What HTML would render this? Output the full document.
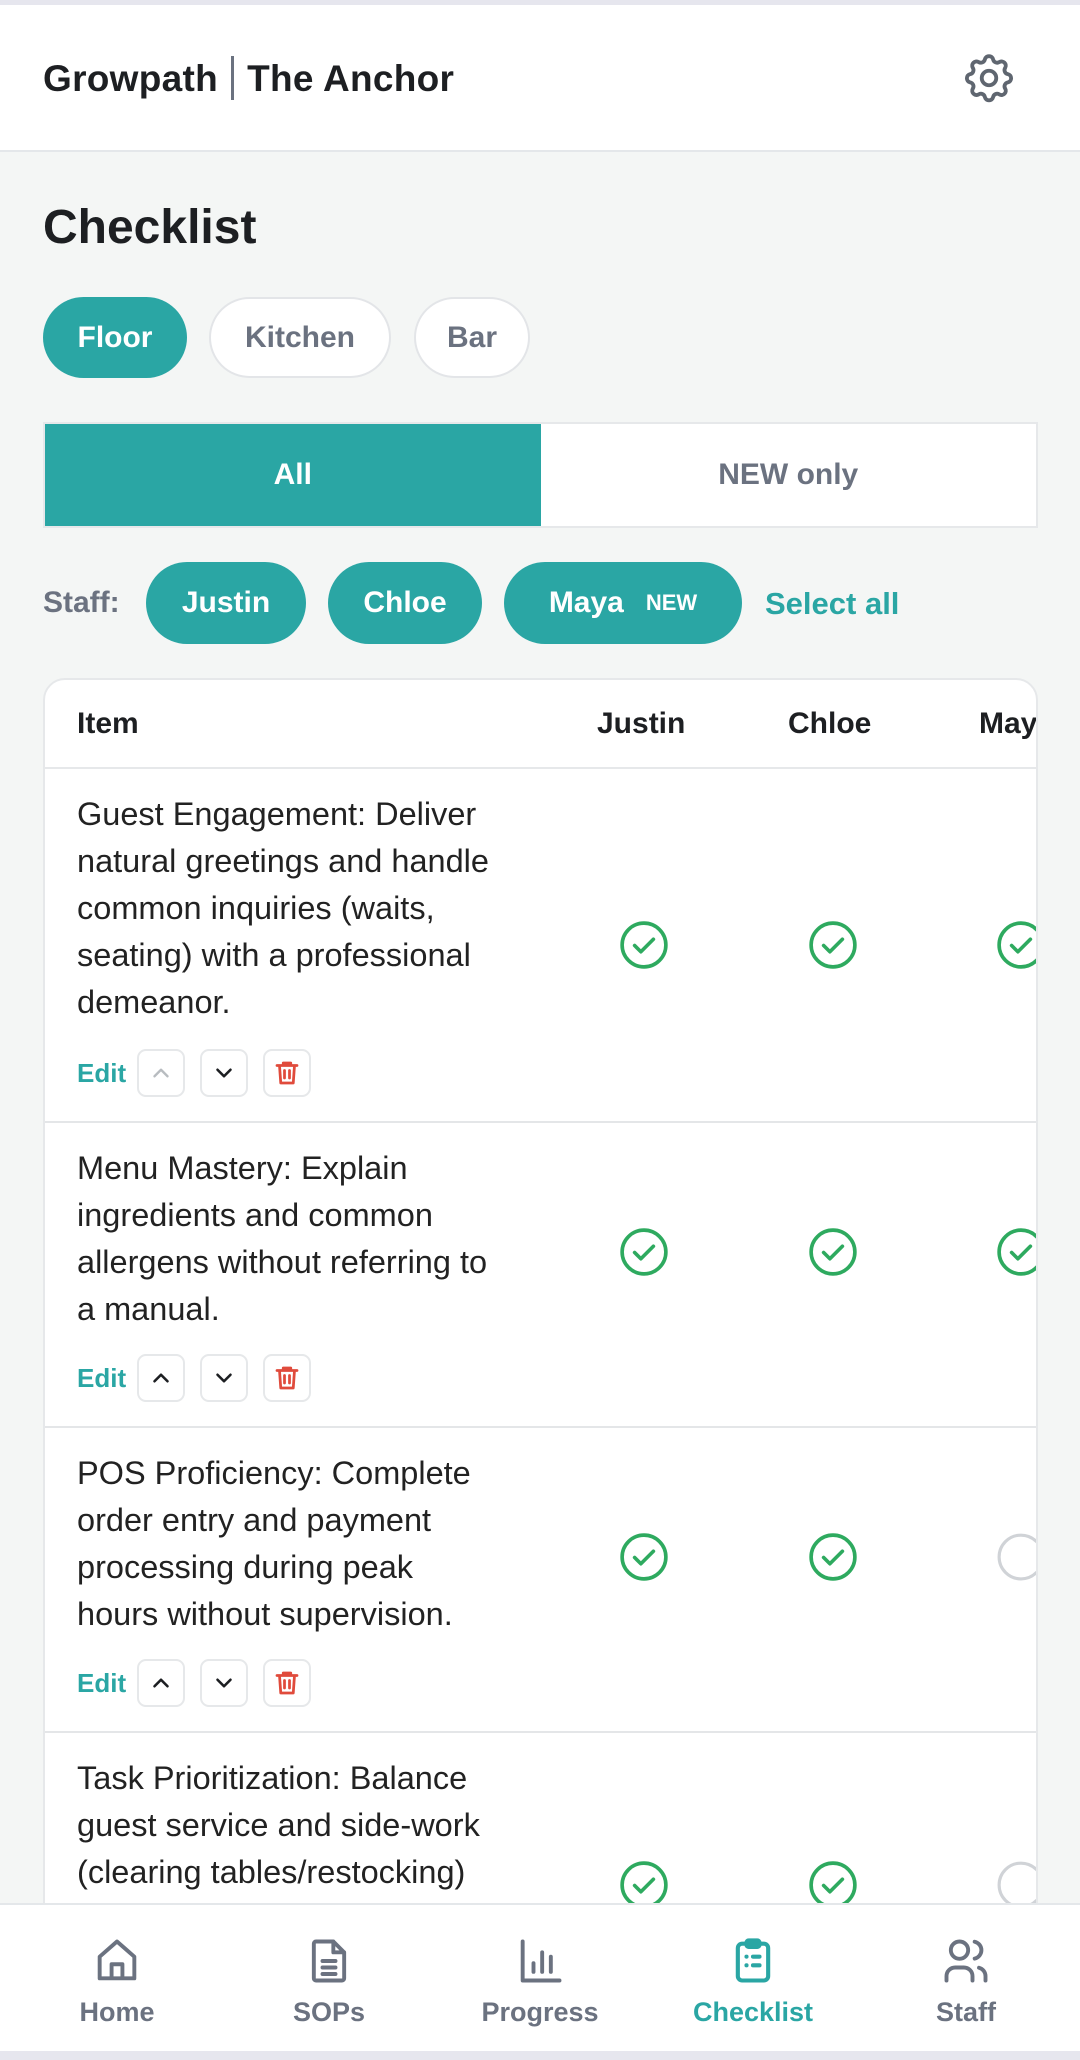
<!DOCTYPE html>
<html><head><meta charset="utf-8"><style>
*{box-sizing:border-box;margin:0;padding:0}
body{width:1080px;height:2060px;overflow:hidden;background:#f4f6f5;font-family:"Liberation Sans",sans-serif;color:#1d1f22;position:relative}
.topline{position:absolute;top:0;left:0;width:1080px;height:5px;background:#e6e6ee}
.header{position:absolute;top:5px;left:0;width:1080px;height:147px;background:#fff;border-bottom:2px solid #e4e7ea}
.title{position:absolute;left:43px;top:51px;font-size:37px;font-weight:700;letter-spacing:0.3px}
.title .bar{display:inline-block;width:3px;height:44px;background:#6b7280;vertical-align:-9px;margin:0 13px}
.gear{position:absolute;left:960px;top:44px}
h1{position:absolute;left:43px;top:200px;font-size:48px;font-weight:700}
.pill{position:absolute;height:81px;border-radius:41px;font-size:30px;font-weight:700;display:flex;align-items:center;justify-content:center}
.on{background:#2aa6a4;color:#fff}
.off{background:#fff;color:#6b7280;border:2px solid #e3e5e8}
.seg{position:absolute;left:43px;top:422px;width:995px;height:106px;background:#fff;border:2px solid #e6e8ea;display:flex}
.seg div{flex:1;display:flex;align-items:center;justify-content:center;font-size:30px;font-weight:700;color:#6b7280}
.seg .a{background:#2aa6a4;color:#fff}
.staff{position:absolute;left:43px;top:586px;font-size:30px;font-weight:700;color:#6b7280}
.sp{height:82px;top:562px}
.sel{position:absolute;left:765px;top:586px;font-size:31px;font-weight:700;color:#2aa6a4}
.card{position:absolute;left:43px;top:678px;width:995px;height:1300px;background:#fff;border:2px solid #e6e8ea;border-radius:22px 22px 0 0;overflow:hidden}
.hrow{position:absolute;left:0;top:0;width:1200px;height:89px;border-bottom:2px solid #e6e8ea;font-size:30px;font-weight:700}
.hrow span{position:absolute;top:27px}
.row{position:absolute;left:0;width:1200px;border-bottom:2px solid #e4e6e8}
.txt{position:absolute;left:32px;top:22px;width:418px;font-size:32.5px;line-height:47px;color:#222}
.acts{position:absolute;left:32px;display:flex;align-items:center;gap:15px}
.edit{font-size:26px;font-weight:700;color:#2aa6a4;margin-right:-4px}
.btn{width:48px;height:48px;border:2px solid #e6e8ea;border-radius:9px;display:flex;align-items:center;justify-content:center}
.ck{position:absolute;width:50px;height:50px}
.nav{position:absolute;left:0;top:1903px;width:1080px;height:150px;background:#fff;border-top:2px solid #e4e7ea}
.ni{position:absolute;top:30px;width:200px;margin-left:-100px;text-align:center;font-size:27px;font-weight:700;color:#6b7280}
.ni svg{display:block;margin:0 auto 10px}
.botline{position:absolute;left:0;top:2051px;width:1080px;height:9px;background:#e6e6ee}
</style></head><body>
<div class="topline"></div>
<div class="header">
<div class="title">Growpath<span class="bar"></span>The Anchor</div>
<svg class="gear" width="58" height="58" viewBox="0 0 24 24" fill="none" stroke="#5f6670" stroke-width="1.6" stroke-linecap="round" stroke-linejoin="round"><path d="M10.3 4.3c.4-1.8 3-1.8 3.4 0a1.7 1.7 0 0 0 2.6 1.1c1.5-.9 3.3.8 2.4 2.4a1.7 1.7 0 0 0 1.1 2.6c1.8.4 1.8 3 0 3.4a1.7 1.7 0 0 0-1.1 2.6c.9 1.5-.8 3.3-2.4 2.4a1.7 1.7 0 0 0-2.6 1.1c-.4 1.8-3 1.8-3.4 0a1.7 1.7 0 0 0-2.6-1.1c-1.5.9-3.3-.8-2.4-2.4a1.7 1.7 0 0 0-1.1-2.6c-1.8-.4-1.8-3 0-3.4a1.7 1.7 0 0 0 1.1-2.6c-.9-1.5.8-3.3 2.4-2.4 1 .6 2.3.1 2.6-1.1z"/><circle cx="12" cy="12" r="3"/></svg>
</div>
<h1>Checklist</h1>
<div class="pill on" style="left:43px;top:297px;width:144px">Floor</div>
<div class="pill off" style="left:209px;top:297px;width:182px">Kitchen</div>
<div class="pill off" style="left:414px;top:297px;width:116px">Bar</div>
<div class="seg"><div class="a">All</div><div>NEW only</div></div>
<div class="staff">Staff:</div>
<div class="pill on sp" style="left:146px;width:160px">Justin</div>
<div class="pill on sp" style="left:328px;width:154px">Chloe</div>
<div class="pill on sp" style="left:504px;width:238px">Maya<span style="font-size:22px;margin-left:22px">NEW</span></div>
<div class="sel">Select all</div>

<div class="card">
<div class="hrow"><span style="left:32px">Item</span><span style="left:552px">Justin</span><span style="left:743px">Chloe</span><span style="left:934px">Maya</span></div>

<div class="row" style="top:89px;height:354px">
<div class="txt">Guest Engagement: Deliver natural greetings and handle common inquiries (waits, seating) with a professional demeanor.</div>
<div class="acts" style="top:280px"><span class="edit">Edit</span>
<div class="btn"><svg width="26" height="26" viewBox="0 0 24 24" fill="none" stroke="#b8bcc0" stroke-width="2.2" stroke-linecap="round" stroke-linejoin="round"><path d="M6 15l6-6 6 6"/></svg></div>
<div class="btn"><svg width="26" height="26" viewBox="0 0 24 24" fill="none" stroke="#1d1f22" stroke-width="2.4" stroke-linecap="round" stroke-linejoin="round"><path d="M6 9l6 6 6-6"/></svg></div>
<div class="btn"><svg width="30" height="30" viewBox="0 0 24 24" fill="none" stroke="#e04b3c" stroke-width="2.2" stroke-linecap="round" stroke-linejoin="round"><path d="M4 6h16M9 6V4h6v2M6 6l1 14h10l1-14M10 10v6M14 10v6"/></svg></div>
</div>
<svg class="ck" style="left:574px;top:151px" viewBox="0 0 48 48"><circle cx="24" cy="24" r="21" fill="none" stroke="#2eaa5f" stroke-width="3.5"/><path d="M15 24.5l6 6 12-12" fill="none" stroke="#2eaa5f" stroke-width="3.5" stroke-linecap="round" stroke-linejoin="round"/></svg>
<svg class="ck" style="left:763px;top:151px" viewBox="0 0 48 48"><circle cx="24" cy="24" r="21" fill="none" stroke="#2eaa5f" stroke-width="3.5"/><path d="M15 24.5l6 6 12-12" fill="none" stroke="#2eaa5f" stroke-width="3.5" stroke-linecap="round" stroke-linejoin="round"/></svg>
<svg class="ck" style="left:951px;top:151px" viewBox="0 0 48 48"><circle cx="24" cy="24" r="21" fill="none" stroke="#2eaa5f" stroke-width="3.5"/><path d="M15 24.5l6 6 12-12" fill="none" stroke="#2eaa5f" stroke-width="3.5" stroke-linecap="round" stroke-linejoin="round"/></svg>
</div>

<div class="row" style="top:443px;height:305px">
<div class="txt">Menu Mastery: Explain ingredients and common allergens without referring to a manual.</div>
<div class="acts" style="top:231px"><span class="edit">Edit</span>
<div class="btn"><svg width="26" height="26" viewBox="0 0 24 24" fill="none" stroke="#1d1f22" stroke-width="2.4" stroke-linecap="round" stroke-linejoin="round"><path d="M6 15l6-6 6 6"/></svg></div>
<div class="btn"><svg width="26" height="26" viewBox="0 0 24 24" fill="none" stroke="#1d1f22" stroke-width="2.4" stroke-linecap="round" stroke-linejoin="round"><path d="M6 9l6 6 6-6"/></svg></div>
<div class="btn"><svg width="30" height="30" viewBox="0 0 24 24" fill="none" stroke="#e04b3c" stroke-width="2.2" stroke-linecap="round" stroke-linejoin="round"><path d="M4 6h16M9 6V4h6v2M6 6l1 14h10l1-14M10 10v6M14 10v6"/></svg></div>
</div>
<svg class="ck" style="left:574px;top:104px" viewBox="0 0 48 48"><circle cx="24" cy="24" r="21" fill="none" stroke="#2eaa5f" stroke-width="3.5"/><path d="M15 24.5l6 6 12-12" fill="none" stroke="#2eaa5f" stroke-width="3.5" stroke-linecap="round" stroke-linejoin="round"/></svg>
<svg class="ck" style="left:763px;top:104px" viewBox="0 0 48 48"><circle cx="24" cy="24" r="21" fill="none" stroke="#2eaa5f" stroke-width="3.5"/><path d="M15 24.5l6 6 12-12" fill="none" stroke="#2eaa5f" stroke-width="3.5" stroke-linecap="round" stroke-linejoin="round"/></svg>
<svg class="ck" style="left:951px;top:104px" viewBox="0 0 48 48"><circle cx="24" cy="24" r="21" fill="none" stroke="#2eaa5f" stroke-width="3.5"/><path d="M15 24.5l6 6 12-12" fill="none" stroke="#2eaa5f" stroke-width="3.5" stroke-linecap="round" stroke-linejoin="round"/></svg>
</div>

<div class="row" style="top:748px;height:305px">
<div class="txt">POS Proficiency: Complete order entry and payment processing during peak hours without supervision.</div>
<div class="acts" style="top:231px"><span class="edit">Edit</span>
<div class="btn"><svg width="26" height="26" viewBox="0 0 24 24" fill="none" stroke="#1d1f22" stroke-width="2.4" stroke-linecap="round" stroke-linejoin="round"><path d="M6 15l6-6 6 6"/></svg></div>
<div class="btn"><svg width="26" height="26" viewBox="0 0 24 24" fill="none" stroke="#1d1f22" stroke-width="2.4" stroke-linecap="round" stroke-linejoin="round"><path d="M6 9l6 6 6-6"/></svg></div>
<div class="btn"><svg width="30" height="30" viewBox="0 0 24 24" fill="none" stroke="#e04b3c" stroke-width="2.2" stroke-linecap="round" stroke-linejoin="round"><path d="M4 6h16M9 6V4h6v2M6 6l1 14h10l1-14M10 10v6M14 10v6"/></svg></div>
</div>
<svg class="ck" style="left:574px;top:104px" viewBox="0 0 48 48"><circle cx="24" cy="24" r="21" fill="none" stroke="#2eaa5f" stroke-width="3.5"/><path d="M15 24.5l6 6 12-12" fill="none" stroke="#2eaa5f" stroke-width="3.5" stroke-linecap="round" stroke-linejoin="round"/></svg>
<svg class="ck" style="left:763px;top:104px" viewBox="0 0 48 48"><circle cx="24" cy="24" r="21" fill="none" stroke="#2eaa5f" stroke-width="3.5"/><path d="M15 24.5l6 6 12-12" fill="none" stroke="#2eaa5f" stroke-width="3.5" stroke-linecap="round" stroke-linejoin="round"/></svg>
<svg class="ck" style="left:951px;top:104px" viewBox="0 0 48 48"><circle cx="24" cy="24" r="21" fill="none" stroke="#d0d3d7" stroke-width="3"/></svg>
</div>

<div class="row" style="top:1053px;height:400px;border:none">
<div class="txt">Task Prioritization: Balance guest service and side-work (clearing tables/restocking) without prompting.</div>
<svg class="ck" style="left:574px;top:127px" viewBox="0 0 48 48"><circle cx="24" cy="24" r="21" fill="none" stroke="#2eaa5f" stroke-width="3.5"/><path d="M15 24.5l6 6 12-12" fill="none" stroke="#2eaa5f" stroke-width="3.5" stroke-linecap="round" stroke-linejoin="round"/></svg>
<svg class="ck" style="left:763px;top:127px" viewBox="0 0 48 48"><circle cx="24" cy="24" r="21" fill="none" stroke="#2eaa5f" stroke-width="3.5"/><path d="M15 24.5l6 6 12-12" fill="none" stroke="#2eaa5f" stroke-width="3.5" stroke-linecap="round" stroke-linejoin="round"/></svg>
<svg class="ck" style="left:951px;top:127px" viewBox="0 0 48 48"><circle cx="24" cy="24" r="21" fill="none" stroke="#d0d3d7" stroke-width="3"/></svg>
</div>
</div>

<div class="nav">
<div class="ni" style="left:117px"><svg width="52" height="52" viewBox="0 0 24 24" fill="none" stroke="#6b7280" stroke-width="1.8" stroke-linecap="round" stroke-linejoin="round"><path d="M4 20V10l8-7 8 7v10zM9.5 20v-6.5h5V20"/></svg>Home</div>
<div class="ni" style="left:329px"><svg width="52" height="52" viewBox="0 0 24 24" fill="none" stroke="#6b7280" stroke-width="1.8" stroke-linecap="round" stroke-linejoin="round"><path d="M6 3h8l5 5v12a1 1 0 0 1-1 1H6a1 1 0 0 1-1-1V4a1 1 0 0 1 1-1zM14 3v5h5M9 12h6M9 15h6M9 18h6"/></svg>SOPs</div>
<div class="ni" style="left:540px"><svg width="52" height="52" viewBox="0 0 24 24" fill="none" stroke="#6b7280" stroke-width="1.8" stroke-linecap="round" stroke-linejoin="round"><path d="M4 3v18h17M9 17v-4M13 17V8M17 17v-7"/></svg>Progress</div>
<div class="ni" style="left:753px;color:#2aa6a4"><svg width="52" height="52" viewBox="0 0 24 24" fill="none" stroke="#2aa6a4" stroke-width="1.9" stroke-linecap="round" stroke-linejoin="round"><rect x="5" y="4" width="14" height="17" rx="2"/><rect x="9" y="2.5" width="6" height="3" rx="1"/><path d="M9 10h.01M12 10h3M9 14h.01M12 14h3"/></svg>Checklist</div>
<div class="ni" style="left:966px"><svg width="52" height="52" viewBox="0 0 24 24" fill="none" stroke="#6b7280" stroke-width="1.8" stroke-linecap="round" stroke-linejoin="round"><circle cx="9" cy="7" r="4"/><path d="M3 21v-2a4 4 0 0 1 4-4h4a4 4 0 0 1 4 4v2M16 3.1a4 4 0 0 1 0 7.8M21 21v-2a4 4 0 0 0-3-3.9"/></svg>Staff</div>
</div>
<div class="botline"></div>
</body></html>
